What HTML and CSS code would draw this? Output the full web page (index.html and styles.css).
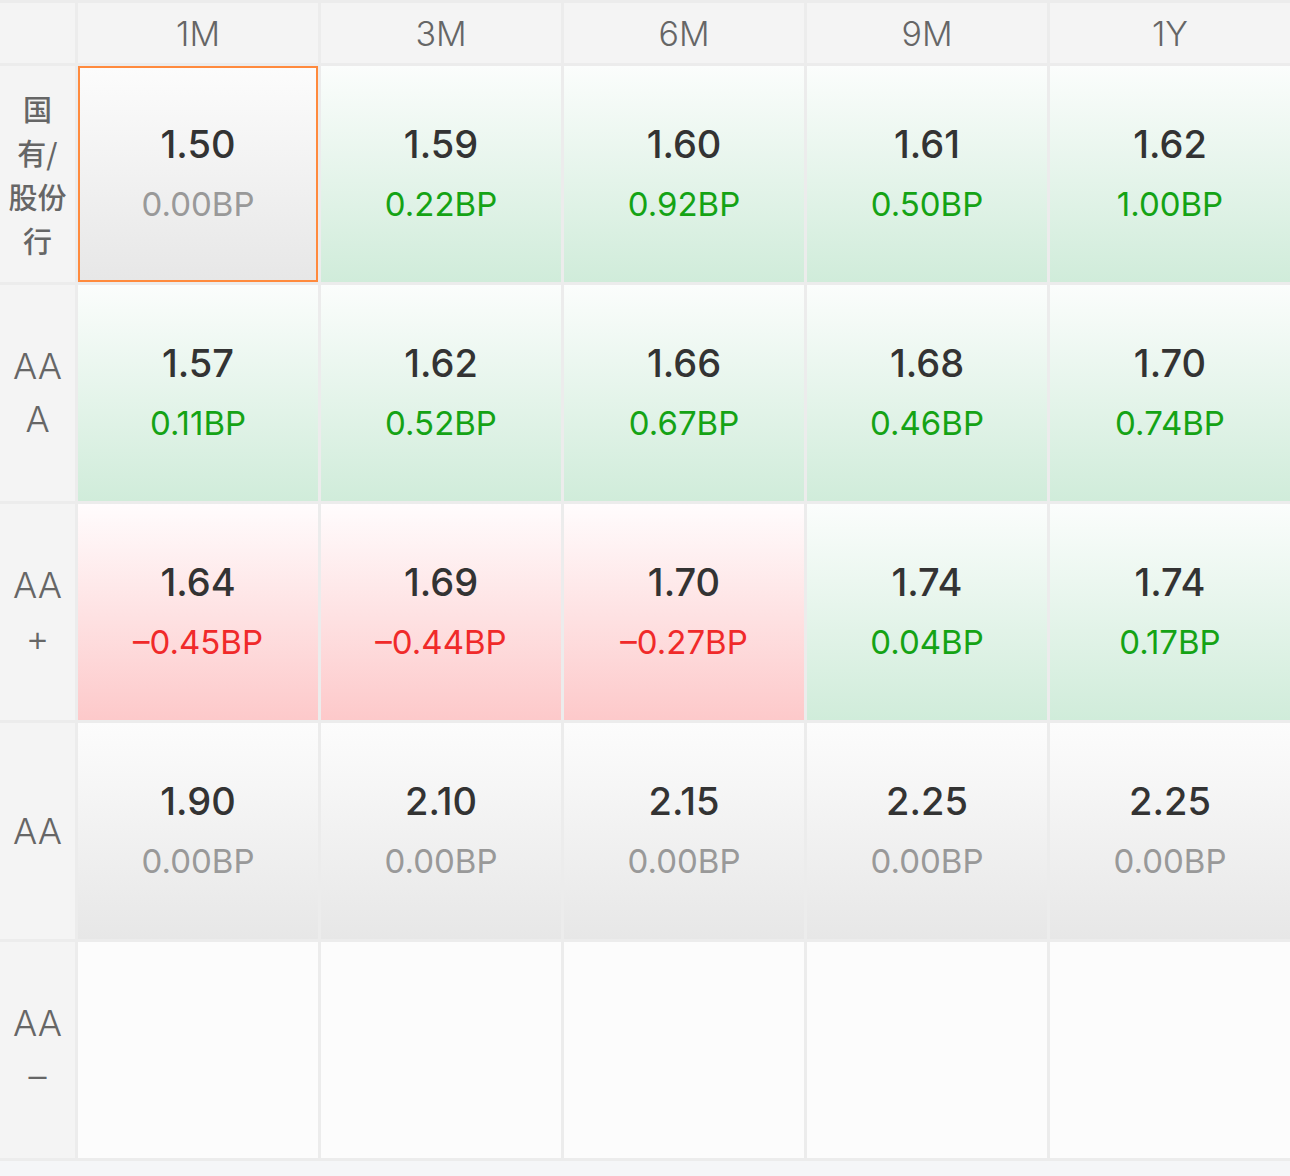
FILE: index.html
```html
<!DOCTYPE html>
<html lang="zh-CN">
<head>
    <meta charset="UTF-8">
    <meta name="viewport" content="width=device-width, initial-scale=1.0">
    <title>存单收益率矩阵</title>
    <link rel="stylesheet" href="styles.css">
</head>
<body>
    <div class="matrix">
        <!-- Header row -->
        <div class="corner"></div>
        <div class="col-head">1M</div>
        <div class="col-head">3M</div>
        <div class="col-head">6M</div>
        <div class="col-head">9M</div>
        <div class="col-head">1Y</div>

        <!-- 国有/股份行 -->
        <div class="row-head long">国<br>有/<br>股份<br>行</div>
        <div class="cell flat selected"><span class="rate">1.50</span><span class="bp">0.00BP</span></div>
        <div class="cell up"><span class="rate">1.59</span><span class="bp">0.22BP</span></div>
        <div class="cell up"><span class="rate">1.60</span><span class="bp">0.92BP</span></div>
        <div class="cell up"><span class="rate">1.61</span><span class="bp">0.50BP</span></div>
        <div class="cell up"><span class="rate">1.62</span><span class="bp">1.00BP</span></div>

        <!-- AAA -->
        <div class="row-head">AA<br>A</div>
        <div class="cell up"><span class="rate">1.57</span><span class="bp">0.11BP</span></div>
        <div class="cell up"><span class="rate">1.62</span><span class="bp">0.52BP</span></div>
        <div class="cell up"><span class="rate">1.66</span><span class="bp">0.67BP</span></div>
        <div class="cell up"><span class="rate">1.68</span><span class="bp">0.46BP</span></div>
        <div class="cell up"><span class="rate">1.70</span><span class="bp">0.74BP</span></div>

        <!-- AA+ -->
        <div class="row-head">AA<br>+</div>
        <div class="cell down"><span class="rate">1.64</span><span class="bp">&ndash;0.45BP</span></div>
        <div class="cell down"><span class="rate">1.69</span><span class="bp">&ndash;0.44BP</span></div>
        <div class="cell down"><span class="rate">1.70</span><span class="bp">&ndash;0.27BP</span></div>
        <div class="cell up"><span class="rate">1.74</span><span class="bp">0.04BP</span></div>
        <div class="cell up"><span class="rate">1.74</span><span class="bp">0.17BP</span></div>

        <!-- AA -->
        <div class="row-head">AA</div>
        <div class="cell flat"><span class="rate">1.90</span><span class="bp">0.00BP</span></div>
        <div class="cell flat"><span class="rate">2.10</span><span class="bp">0.00BP</span></div>
        <div class="cell flat"><span class="rate">2.15</span><span class="bp">0.00BP</span></div>
        <div class="cell flat"><span class="rate">2.25</span><span class="bp">0.00BP</span></div>
        <div class="cell flat"><span class="rate">2.25</span><span class="bp">0.00BP</span></div>

        <!-- AA- (no quotes) -->
        <div class="row-head">AA<br>&ndash;</div>
        <div class="cell empty"></div>
        <div class="cell empty"></div>
        <div class="cell empty"></div>
        <div class="cell empty"></div>
        <div class="cell empty"></div>
    </div>
    <div class="footer"></div>
</body>
</html>
```

FILE: styles.css
```css
* {
    box-sizing: border-box;
    margin: 0;
    padding: 0;
}

body {
    font-family: Inter, "Liberation Sans", "Noto Sans CJK SC", sans-serif;
    background-color: #f5f6f8;
    width: 1290px;
}

.matrix {
    display: grid;
    grid-template-columns: 75px repeat(5, 240px);
    grid-template-rows: 60px repeat(5, 216px);
    gap: 3px;
    padding: 3px 0;
    background-color: #ececec;
}

.corner,
.col-head,
.row-head {
    background-color: #f4f4f4;
    color: #666;
    display: flex;
    align-items: center;
    justify-content: center;
    text-align: center;
}

.col-head {
    font-size: 34px;
    font-weight: 300;
}

.row-head {
    font-size: 36px;
    font-weight: 300;
    line-height: 53px;
}

.row-head.long {
    font-family: "Noto Sans CJK SC", sans-serif;
    font-size: 29px;
    font-weight: 500;
    line-height: 44px;
}

/* Quote cells */
.cell {
    display: flex;
    flex-direction: column;
    align-items: center;
    justify-content: center;
}

.rate {
    font-size: 38px;
    font-weight: 500;
    color: #333;
    line-height: 60px;
}

.bp {
    font-size: 33px;
    font-weight: 400;
    line-height: 60px;
}

.flat {
    background: linear-gradient(to bottom, #fcfcfc, #e7e7e7);
}

.flat .bp {
    color: #999;
}

.up {
    background: linear-gradient(to bottom, #fbfdfc, #d0ecda);
}

.up .bp {
    color: #15a315;
}

.down {
    background: linear-gradient(to bottom, #fffcfd, #fdc9ca);
}

.down .bp {
    color: #f02a2a;
}

.empty {
    background-color: #fcfcfc;
}

.selected {
    border: 2px solid #ff8a3d;
}

.footer {
    height: 15px;
    background-color: #f5f6f8;
}
```
